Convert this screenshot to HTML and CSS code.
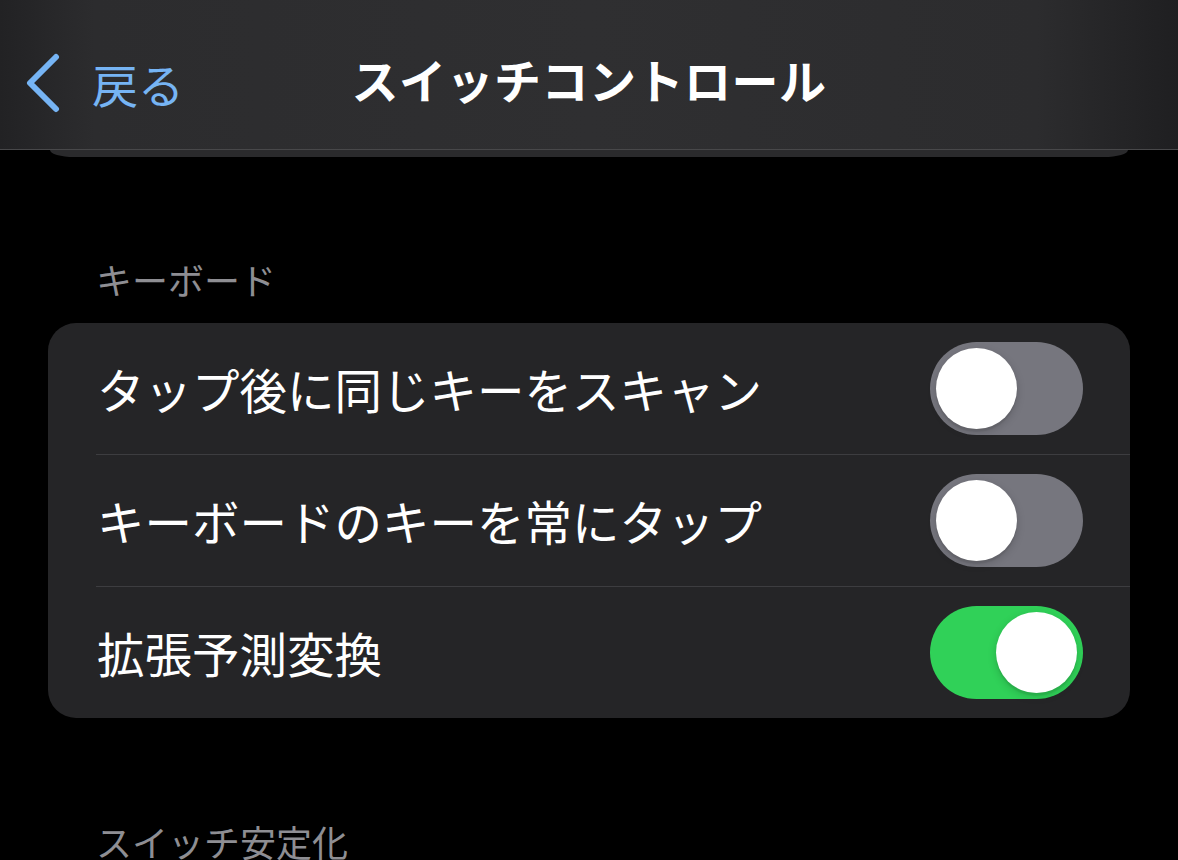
FILE: index.html
```html
<!DOCTYPE html>
<html lang="ja">
<head>
<meta charset="utf-8">
<link rel="stylesheet" href="styles.css">
</head>
<body>
<div class="screen">
  <header class="navbar">
    <div class="back">
      <svg class="chevron" width="40" height="60" viewBox="0 0 40 60">
        <path d="M32 4 L6 30 L32 56" fill="none" stroke="#76b4f4" stroke-width="6" stroke-linecap="round" stroke-linejoin="round"/>
      </svg>
      <span class="back-label">戻る</span>
    </div>
    <h1 class="title">スイッチコントロール</h1>
  </header>
  <div class="card-tail"></div>

  <div class="section-label">キーボード</div>
  <div class="card">
    <div class="row">
      <span class="row-label">タップ後に同じキーをスキャン</span>
      <span class="toggle"><span class="knob"></span></span>
    </div>
    <div class="sep"></div>
    <div class="row">
      <span class="row-label">キーボードのキーを常にタップ</span>
      <span class="toggle"><span class="knob"></span></span>
    </div>
    <div class="sep"></div>
    <div class="row">
      <span class="row-label">拡張予測変換</span>
      <span class="toggle on"><span class="knob"></span></span>
    </div>
  </div>

  <div class="section-label second">スイッチ安定化</div>
</div>
</body>
</html>
```

FILE: styles.css
```css
html, body {
  margin: 0;
  padding: 0;
  background: #000;
}
body {
  font-family: "Noto Sans CJK JP", "Noto Sans", sans-serif;
  color: #fff;
  width: 1178px;
  height: 860px;
  overflow: hidden;
}
.screen {
  display: flex;
  flex-direction: column;
}
.navbar {
  height: 150px;
  border-bottom: 1px solid #48484a;
  box-sizing: border-box;
  background: linear-gradient(90deg, #222224 0%, #2c2c2e 8%, #2f2f31 50%, #2c2c2e 88%, #1f1f21 100%);
  display: flex;
  align-items: center;
  justify-content: center;
  position: relative;
}
.back {
  position: absolute;
  left: 24px;
  top: 53px;
  display: flex;
  align-items: center;
  gap: 28px;
}
.chevron {
  display: block;
}
.back-label {
  font-size: 46px;
  line-height: 58px;
  color: #76b4f4;
}
.title {
  margin: 0;
  font-size: 47px;
  font-weight: 700;
  line-height: 60px;
  margin-top: 8px;
  letter-spacing: 0.5px;
}
.card-tail {
  height: 7px;
  margin: 0 50px;
  background: #2a2a2c;
  border-radius: 0 0 24px 24px / 0 0 7px 7px;
}
.section-label {
  font-size: 36px;
  line-height: 44px;
  color: #8e8e93;
  padding-left: 96px;
  margin-top: 100px;
  margin-bottom: 22px;
}
.section-label.second {
  line-height: 36px;
  margin-top: 105px;
  margin-bottom: 0;
}
.card {
  margin: 0 48px;
  background: #252527;
  border-radius: 28px;
  display: flex;
  flex-direction: column;
}
.row {
  height: 131px;
  display: flex;
  align-items: center;
  justify-content: space-between;
  padding: 0 47px 0 49px;
}
.row-label {
  font-size: 47.5px;
  line-height: 60px;
}
.sep {
  height: 1px;
  background: #3d3d40;
  margin-left: 48px;
}
.toggle {
  width: 153px;
  height: 93px;
  border-radius: 47px;
  background: #76767e;
  display: flex;
  align-items: center;
  padding: 0 6px;
  box-sizing: border-box;
  justify-content: flex-start;
}
.toggle.on {
  background: #30d158;
  justify-content: flex-end;
}
.knob {
  width: 81px;
  height: 81px;
  border-radius: 50%;
  background: #fff;
  box-shadow: 0 3px 8px rgba(0, 0, 0, 0.18), 0 3px 1px rgba(0, 0, 0, 0.06);
}
```
